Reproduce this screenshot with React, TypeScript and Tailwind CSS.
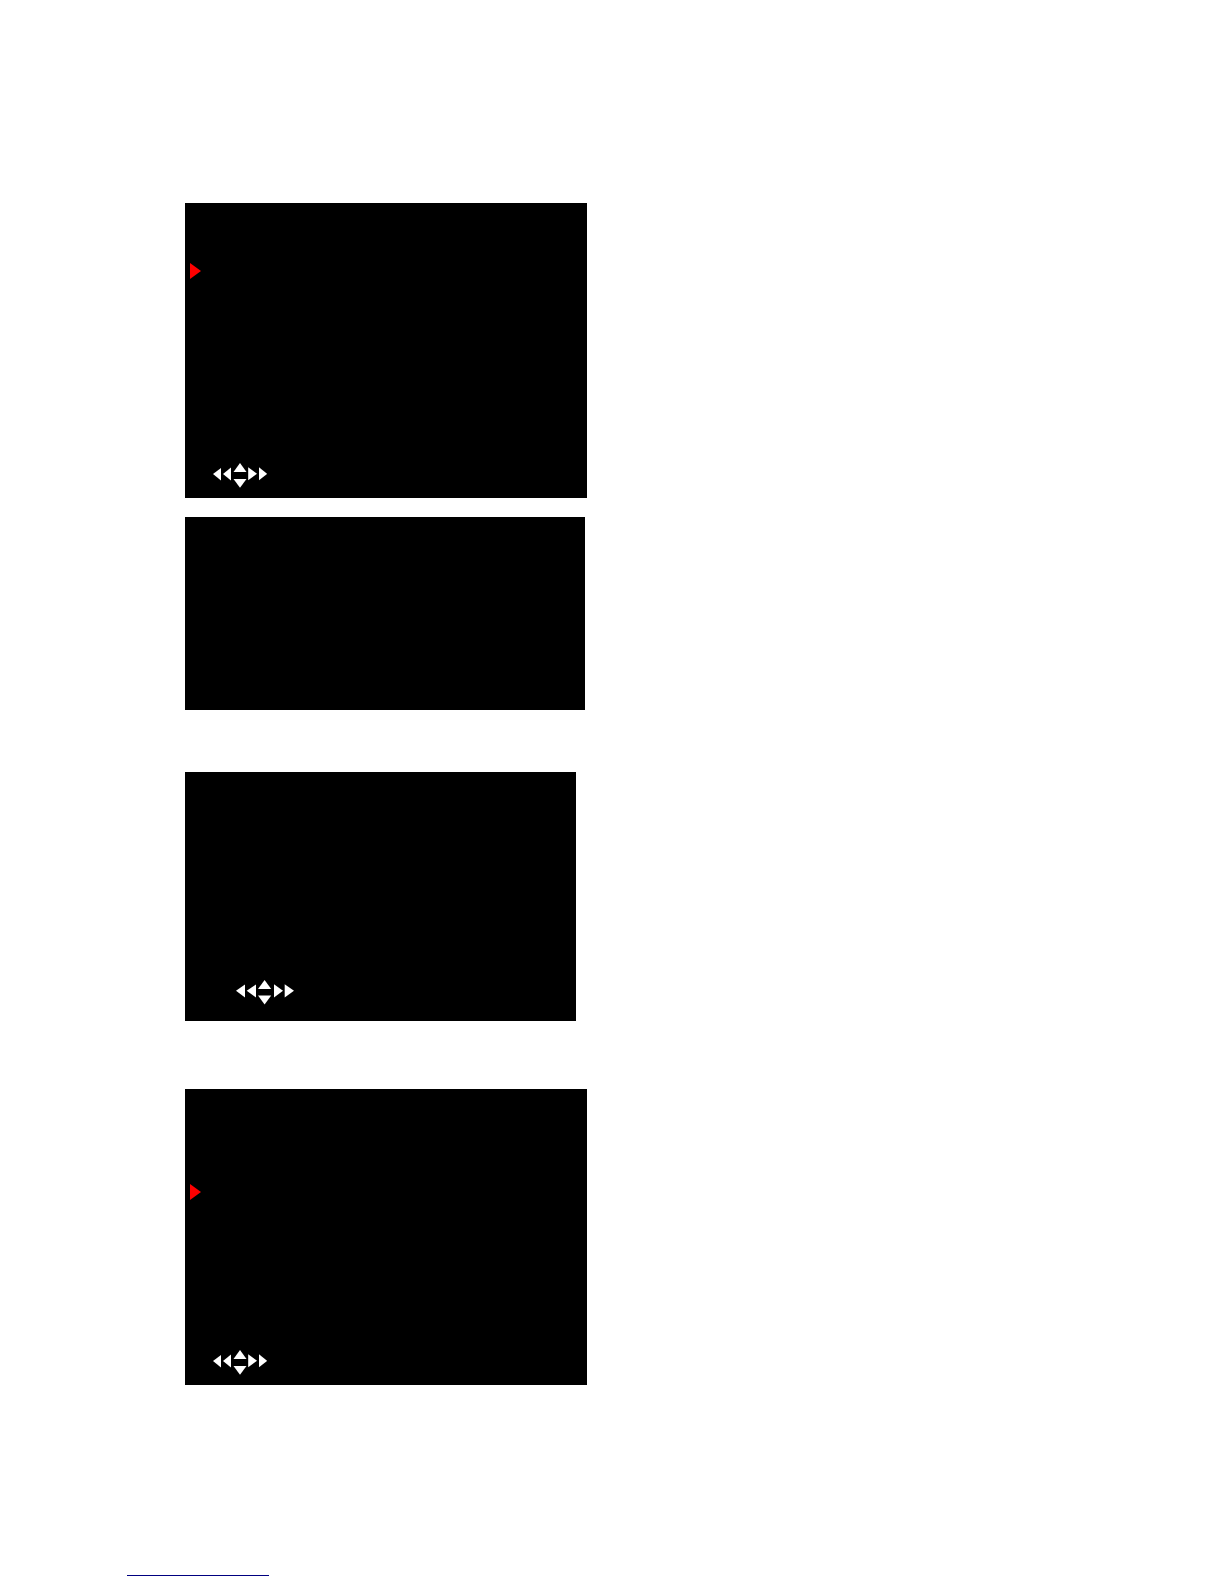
import type { ReactNode } from 'react';
import { clsx } from 'clsx';

type ScreenProps = {
  label: string;
  className: string;
  children?: ReactNode;
};

function Screen({ label, className, children }: ScreenProps) {
  return (
    <section aria-label={label} className={clsx('flex w-full flex-col bg-black', className)}>
      {children}
    </section>
  );
}

function Cursor() {
  return (
    <svg className="ml-[5px] h-4 w-[11px]" viewBox="0 0 11 16" fill="#ff0000" aria-hidden="true">
      <path d="M0 0 L11 8 L0 16 Z" />
    </svg>
  );
}

function NavKeys() {
  return (
    <svg className="ml-7 mt-auto mb-2.5 h-[25px] w-[54px]" viewBox="0 0 54 25" fill="#ffffff" aria-hidden="true">
      <path d="M0 11 L8 5 V17.5 Z" />
      <path d="M10 11 L18 4.5 V17.5 Z" />
      <path d="M27 0 L33.5 9 H20.5 Z" />
      <path d="M27 24.8 L20.5 16 H33.5 Z" />
      <path d="M35.2 4.2 L44 10.8 L35.2 17.2 Z" />
      <path d="M46 4.2 L54.2 10.8 L46 17.2 Z" />
    </svg>
  );
}

// slightly wider key group used on the third screen
function NavKeysWide() {
  return (
    <svg className="ml-[51px] mt-auto mb-4 h-[25px] w-[58px]" viewBox="0 0 58 25" fill="#ffffff" aria-hidden="true">
      <path d="M0 10.8 L9 4.5 V17.5 Z" />
      <path d="M10.7 10.8 L20 4.5 V17.5 Z" />
      <path d="M28.6 0 L35.2 9 H22 Z" />
      <path d="M28.6 24.5 L22 15.5 H35.2 Z" />
      <path d="M38 4.2 L47 10.8 L38 17.5 Z" />
      <path d="M48.7 4.2 L58 10.8 L48.7 17.5 Z" />
    </svg>
  );
}

export default function App() {
  return (
    <div className="min-h-screen bg-white px-[127px] pt-[203px] pb-2">
      <main className="flex flex-col pl-[58px]">
        <Screen label="Screen 1" className="min-h-[295px] max-w-[402px] pt-[60px]">
          <Cursor />
          <NavKeys />
        </Screen>

        <Screen label="Screen 2" className="mt-[19px] min-h-[193px] max-w-[400px]" />

        <Screen label="Screen 3" className="mt-[62px] min-h-[249px] max-w-[391px]">
          <NavKeysWide />
        </Screen>

        <Screen label="Screen 4" className="mt-[68px] min-h-[296px] max-w-[402px] pt-[95px]">
          <Cursor />
          <NavKeys />
        </Screen>
      </main>

      <footer className="mt-[171px]">
        <a href="#top" aria-label="Back to top" className="block h-5 w-[142px] border-b border-[#000080]" />
      </footer>
    </div>
  );
}
